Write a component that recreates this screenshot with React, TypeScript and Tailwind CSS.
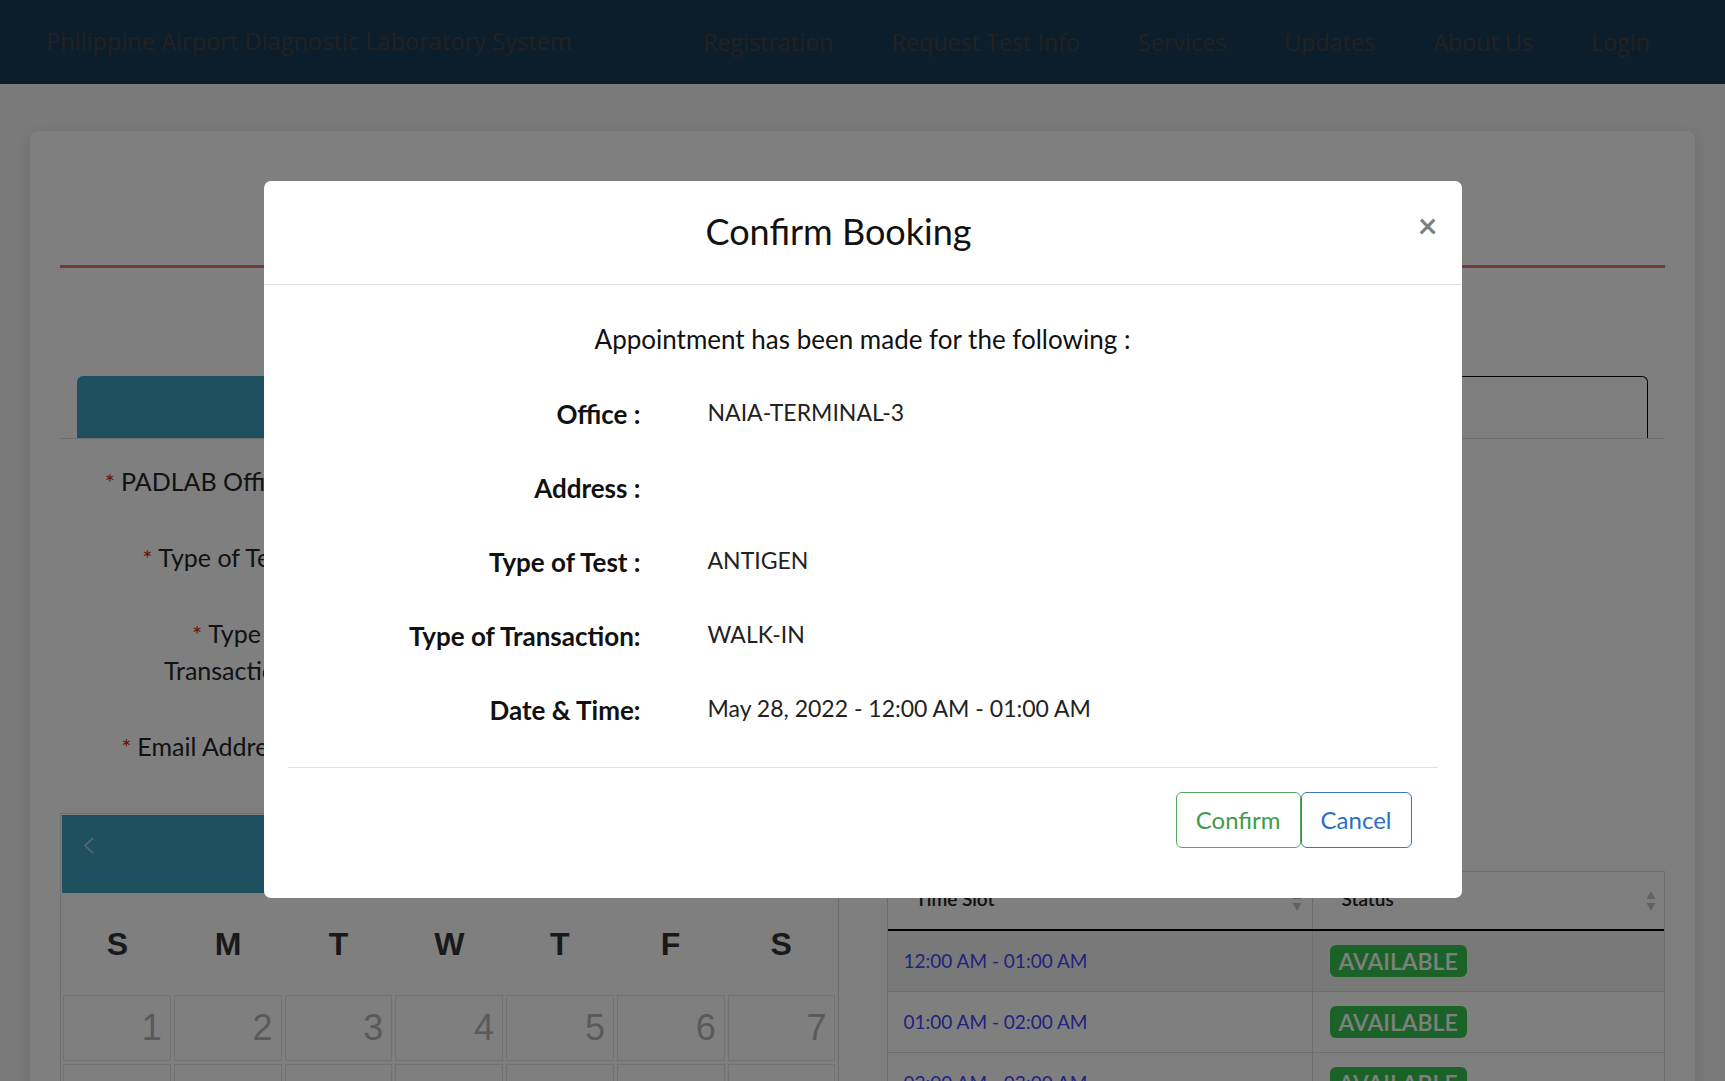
import React from "react";

const navLinks = ["Registration", "Request Test Info", "Services", "Updates", "About Us", "Login"];

const formLabels = [
  { lines: ["PADLAB Office"] },
  { lines: ["Type of Test"] },
  { lines: ["Type of", "Transaction"] },
  { lines: ["Email Address"] },
];

const dayNames = ["S", "M", "T", "W", "T", "F", "S"];

const slots = [
  "12:00 AM - 01:00 AM",
  "01:00 AM - 02:00 AM",
  "02:00 AM - 03:00 AM",
];

const details = [
  { label: "Office :", value: "NAIA-TERMINAL-3" },
  { label: "Address :", value: "" },
  { label: "Type of Test :", value: "ANTIGEN" },
  { label: "Type of Transaction:", value: "WALK-IN" },
  { label: "Date & Time:", value: "May 28, 2022 - 12:00 AM - 01:00 AM" },
];

// sort arrows drawn as small triangles
function SortArrows() {
  return (
    <svg width="10" height="22" viewBox="0 0 10 22" fill="#c4c4c4">
      <path d="M5 1L9.5 9H0.5Z" />
      <path d="M5 21L9.5 13H0.5Z" />
    </svg>
  );
}

export default function App() {
  return (
    <div className="min-h-screen bg-[#f4f4f4] font-['Lato',sans-serif] text-[#212529]">
      {/* navbar */}
      <nav className="h-[84px] bg-[#183c58] flex items-center pl-[46px] pr-[75px] font-['Open_Sans',sans-serif] text-[23.3px] text-[#444]">
        <span className="text-[23.6px]">Philippine Airport Diagnostic Laboratory System</span>
        <ul className="ml-auto flex gap-[58px]">
          {navLinks.map((l) => (
            <li key={l}>{l}</li>
          ))}
        </ul>
      </nav>

      {/* page card */}
      <div className="px-[30px] pt-[47px]">
        <div className="bg-white rounded-lg shadow-[0_4px_14px_rgba(0,0,0,0.12)] px-[30px] pb-[40px]">
          <div className="h-[137px] border-b-[3px] border-[#ef7070]" />

          {/* tabs */}
          <div className="mt-[108px] flex px-[17px] border-b border-[#dcdcdc]">
            <div className="w-[785px] h-[62px] bg-[#3ea0be] rounded-tl-md" />
            <div className="flex-1 h-[62px] border border-b-0 border-black rounded-tr-md" />
          </div>

          {/* form labels */}
          <div className="pt-[24px] flex flex-col gap-[39px]">
            {formLabels.map((f, i) => (
              <div key={i} className="w-[230px] text-right text-[25px] leading-[37px]">
                {f.lines.map((line, j) => (
                  <div key={j}>
                    {j === 0 && <span className="text-[#d22] text-[24px] mr-[6px]">*</span>}
                    {line}
                  </div>
                ))}
              </div>
            ))}
          </div>

          {/* calendar + time slots */}
          <div className="mt-[48px] grid grid-cols-2 gap-[48px]">
            <div className="border border-[#d6dde0] p-[1px]">
              <div className="h-[78px] bg-[#3ea0be] pl-[21px] pt-[22px]">
                <svg width="11" height="17" viewBox="0 0 11 17" fill="none">
                  <path d="M10 1L2 8.5L10 16" stroke="rgba(255,255,255,0.55)" strokeWidth="1.6" />
                </svg>
              </div>
              <div className="grid grid-cols-7 h-[102px] items-center font-['Liberation_Sans',sans-serif] font-bold text-[32px] text-[#333]">
                {dayNames.map((d, i) => (
                  <div key={i} className="text-center">
                    {d}
                  </div>
                ))}
              </div>
              <div className="grid grid-cols-7 gap-[3px] px-[1px] font-['Liberation_Sans',sans-serif] text-[36px] text-[#b4b4b4]">
                {Array.from({ length: 14 }, (_, i) => (
                  <div key={i} className="h-[66px] border border-[#e4e4e4] flex items-center justify-end pr-[8px]">
                    {i < 7 ? i + 1 : ""}
                  </div>
                ))}
              </div>
            </div>

            <div className="mt-[58px]">
              <div className="border border-[#dcdcdc]">
                <div className="flex h-[59px] border-b-2 border-black text-[19px] font-semibold text-[#222]">
                  <div className="w-[425px] border-r border-[#dcdcdc] flex items-center justify-between pl-[28px] pr-[10px]">
                    <span className="-mt-[3px]">Time Slot</span>
                    <SortArrows />
                  </div>
                  <div className="flex-1 flex items-center justify-between pl-[29px] pr-[8px]">
                    <span className="-mt-[3px]">Status</span>
                    <SortArrows />
                  </div>
                </div>
                {slots.map((s, i) => (
                  <div
                    key={s}
                    className={`flex h-[61px] border-b border-[#dcdcdc] ${i === 0 ? "bg-[#f2f2f2]" : "bg-white"}`}
                  >
                    <div className="w-[425px] border-r border-[#dcdcdc] flex items-center pl-[16px] text-[19px] text-[#4444ff]">
                      {s}
                    </div>
                    <div className="flex-1 flex items-center pl-[17px]">
                      <span className="bg-[#37c552] text-white text-[23px] font-semibold rounded-[6px] h-[32px] px-[9px] flex items-center">
                        AVAILABLE
                      </span>
                    </div>
                  </div>
                ))}
              </div>
            </div>
          </div>
        </div>
      </div>

      {/* backdrop */}
      <div className="fixed inset-0 bg-black/50" />

      {/* modal */}
      <div className="fixed inset-0 flex justify-center pt-[181px]">
        <div className="w-[1198px] h-[717px] bg-white rounded-[7px] self-start">
          <div className="h-[104px] flex items-center px-[24px] border-b border-[#dee2e6]">
            <h4 className="flex-1 text-center text-[36px] leading-none text-[#111] -mt-[4px]">Confirm Booking</h4>
            <button className="w-[48px] text-right text-[34px] font-bold leading-none text-black/50 -mt-[16px]">
              ×
            </button>
          </div>

          <div className="px-[24px] pt-[36px]">
            <p className="text-center text-[26px] leading-[36px] text-[#111]">
              Appointment has been made for the following :
            </p>
            <div className="mt-[39px] flex flex-col gap-[38px]">
              {details.map((d) => (
                <div key={d.label} className="flex items-center h-[36px] leading-[36px]">
                  <div className="w-[353px] text-right text-[26px] font-bold text-[#111]">{d.label}</div>
                  <div className="ml-[67px] pb-[4px] text-[23px] text-[#222]">{d.value}</div>
                </div>
              ))}
            </div>
            <div className="mt-[39px] border-t border-[#dee2e6]" />
            <div className="flex justify-end pt-[24px] pr-[26px]">
              <button className="h-[56px] px-[19px] border border-[#52a85c] rounded-[6px] text-[24px] text-[#3f9b4b]">
                Confirm
              </button>
              <button className="h-[56px] px-[19px] border border-[#3a78b8] rounded-[6px] text-[24px] text-[#2c6fc4]">
                Cancel
              </button>
            </div>
          </div>
        </div>
      </div>
    </div>
  );
}
